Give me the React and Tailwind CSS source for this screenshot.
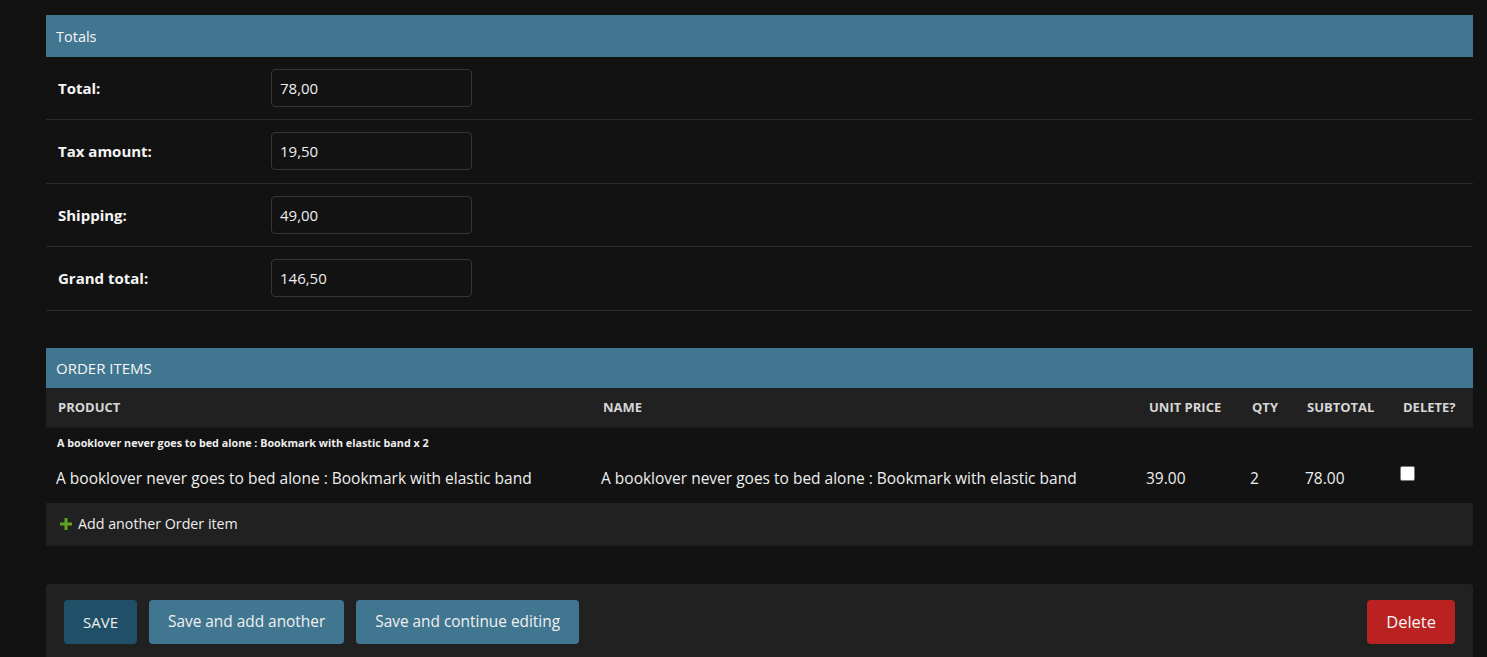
import React from "react";

const font = { fontFamily: '"Open Sans", "Noto Sans", sans-serif' };

function FieldRow({ label, value }) {
  return (
    <div className="flex h-[63.5px] items-center border-b border-[#2a2a2a]">
      <div className="w-[225px] pl-3 text-[15px] font-bold text-[#f5f5f5]">{label}</div>
      <div className="flex h-[38px] w-[201px] items-center rounded-[4px] border border-[#353535] bg-[#121212] px-2 text-[15px] text-[#eeeeee]">
        {value}
      </div>
    </div>
  );
}

export default function App() {
  const cols = "grid grid-cols-[545px_545px_104px_55px_95px_83px]";
  const title = "A booklover never goes to bed alone : Bookmark with elastic band";
  return (
    <div className="min-h-[657px] bg-[#121212] pl-[46px] pr-[14px] pt-[15px]" style={font}>
      {/* Totals */}
      <div className="flex h-[41.5px] items-center bg-[#417690] px-[10px] pt-[3px] text-[14.5px] text-[#f5f5f5]">Totals</div>
      <FieldRow label="Total:" value="78,00" />
      <FieldRow label="Tax amount:" value="19,50" />
      <FieldRow label="Shipping:" value="49,00" />
      <FieldRow label="Grand total:" value="146,50" />

      {/* Order items */}
      <div className="mt-[37.5px] flex h-[40px] items-center bg-[#417690] px-[10px] text-[15px] text-[#f5f5f5]">ORDER ITEMS</div>
      <div className={`${cols} h-[40px] items-center border-b border-[#1c1c1c] bg-[#212121] text-[13px] font-bold text-[#d6d6d6]`}>
        <div className="pl-3">PRODUCT</div>
        <div className="pl-3">NAME</div>
        <div className="pl-[13px]">UNIT PRICE</div>
        <div className="pl-3">QTY</div>
        <div className="pl-3">SUBTOTAL</div>
        <div className="pl-[13px]">DELETE?</div>
      </div>
      <div className="bg-[#121212]">
        <div className="h-[29px] pl-[11px] pt-[8px] text-[10.75px] font-bold leading-[14px] text-[#eeeeee]">{title} x 2</div>
        <div className={`${cols} h-[46px] items-start pt-[11px] text-[15.5px] leading-[20px] text-[#eeeeee]`}>
          <div className="pl-[10px]">{title}</div>
          <div className="pl-[10px]">{title}</div>
          <div className="pl-[10px]">39.00</div>
          <div className="pl-[10px]">2</div>
          <div className="pl-[10px]">78.00</div>
          <div className="pl-[10px]">
            <div className="-mt-[2px] h-[15px] w-[15px] rounded-[2px] border border-[#777] bg-white" />
          </div>
        </div>
      </div>
      <div className="flex h-[43px] items-center border-b border-[#1c1c1c] bg-[#212121] pl-[14px] text-[14.25px] text-[#eeeeee]">
        <svg width="12" height="12" viewBox="0 0 12 12" className="mr-[6px]">
          <rect x="4.5" y="0" width="3" height="12" fill="#5fa225" />
          <rect x="0" y="4.5" width="12" height="3" fill="#5fa225" />
        </svg>
        Add another Order item
      </div>

      {/* Submit row */}
      <div className="mt-[38px] flex h-[80px] items-start justify-between rounded-[4px] bg-[#212121] px-[18px] pt-[16px]">
        <div className="flex gap-3">
          <button className="h-[44px] rounded-[4px] bg-[#205067] px-[19px] text-[15px] text-[#f0f0f0]">SAVE</button>
          <button className="h-[44px] rounded-[4px] bg-[#417690] px-[19px] text-[15.4px] text-[#f0f0f0]">Save and add another</button>
          <button className="h-[44px] rounded-[4px] bg-[#417690] px-[19px] text-[15.4px] text-[#f0f0f0]">Save and continue editing</button>
        </div>
        <button className="h-[44px] rounded-[4px] bg-[#ba2121] px-[19px] text-[16.5px] text-[#f5f5f5]">Delete</button>
      </div>
    </div>
  );
}
